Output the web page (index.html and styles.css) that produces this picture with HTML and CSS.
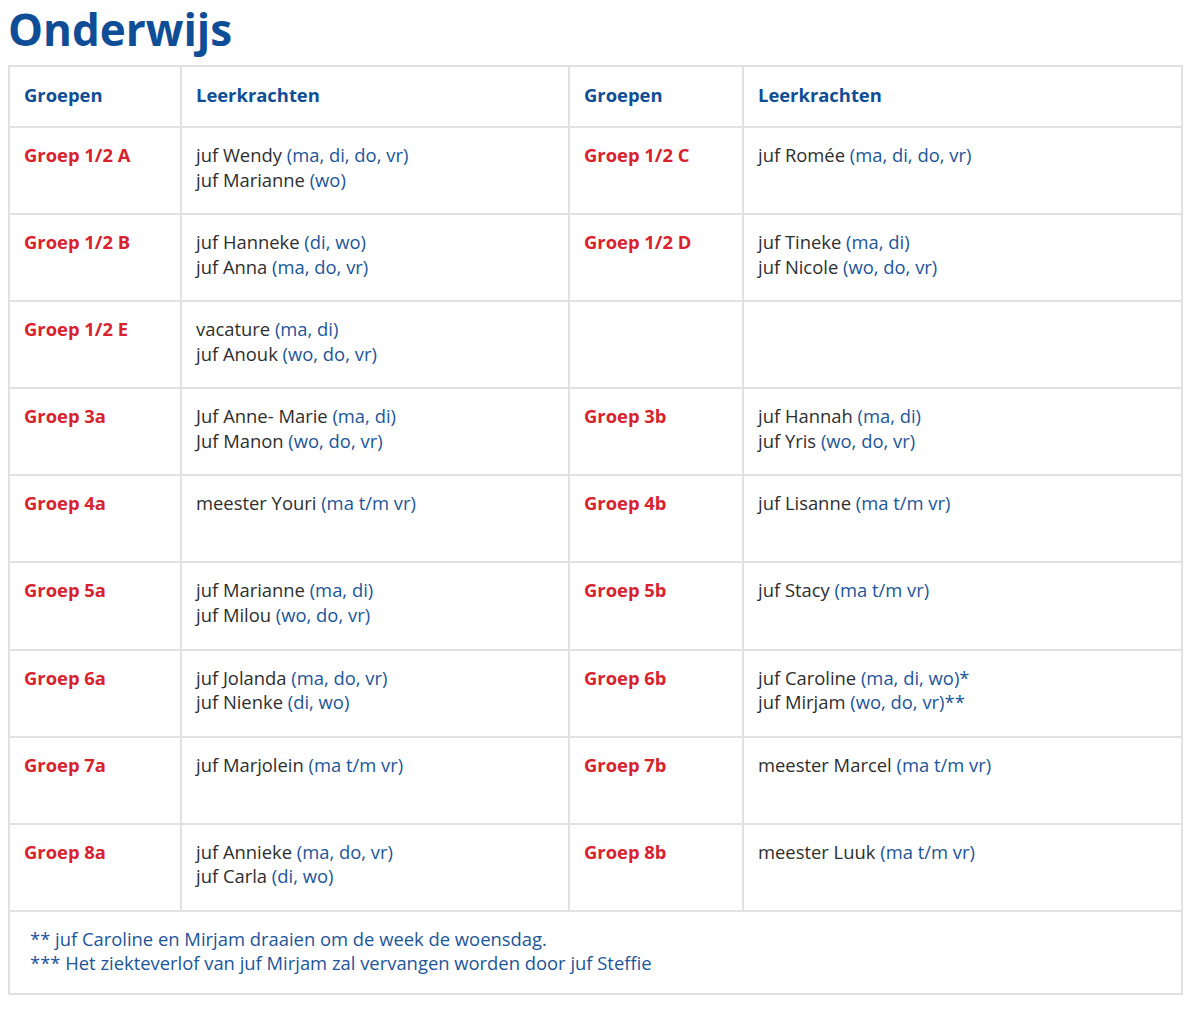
FILE: index.html
```html
<!DOCTYPE html>
<html lang="nl">
<head>
<meta charset="utf-8">
<title>Onderwijs</title>
<link rel="stylesheet" href="styles.css">
</head>
<body>
<h1 class="title">Onderwijs</h1>
<table class="grid">
  <colgroup>
    <col class="c1"><col class="c2"><col class="c3"><col class="c4">
  </colgroup>
  <thead>
    <tr class="head">
      <th>Groepen</th><th>Leerkrachten</th><th>Groepen</th><th>Leerkrachten</th>
    </tr>
  </thead>
  <tbody>
    <tr>
      <td class="grp">Groep 1/2 A</td>
      <td>juf Wendy <span class="d">(ma, di, do, vr)</span><br>juf Marianne <span class="d">(wo)</span></td>
      <td class="grp">Groep 1/2 C</td>
      <td>juf Romée <span class="d">(ma, di, do, vr)</span></td>
    </tr>
    <tr>
      <td class="grp">Groep 1/2 B</td>
      <td>juf Hanneke <span class="d">(di, wo)</span><br>juf Anna <span class="d">(ma, do, vr)</span></td>
      <td class="grp">Groep 1/2 D</td>
      <td>juf Tineke <span class="d">(ma, di)</span><br>juf Nicole <span class="d">(wo, do, vr)</span></td>
    </tr>
    <tr>
      <td class="grp">Groep 1/2 E</td>
      <td>vacature <span class="d">(ma, di)</span><br>juf Anouk <span class="d">(wo, do, vr)</span></td>
      <td></td>
      <td></td>
    </tr>
    <tr>
      <td class="grp">Groep 3a</td>
      <td>Juf Anne- Marie <span class="d">(ma, di)</span><br>Juf Manon <span class="d">(wo, do, vr)</span></td>
      <td class="grp">Groep 3b</td>
      <td>juf Hannah <span class="d">(ma, di)</span><br>juf Yris <span class="d">(wo, do, vr)</span></td>
    </tr>
    <tr>
      <td class="grp">Groep 4a</td>
      <td>meester Youri <span class="d">(ma t/m vr)</span></td>
      <td class="grp">Groep 4b</td>
      <td>juf Lisanne <span class="d">(ma t/m vr)</span></td>
    </tr>
    <tr>
      <td class="grp">Groep 5a</td>
      <td>juf Marianne <span class="d">(ma, di)</span><br>juf Milou <span class="d">(wo, do, vr)</span></td>
      <td class="grp">Groep 5b</td>
      <td>juf Stacy <span class="d">(ma t/m vr)</span></td>
    </tr>
    <tr>
      <td class="grp">Groep 6a</td>
      <td>juf Jolanda <span class="d">(ma, do, vr)</span><br>juf Nienke <span class="d">(di, wo)</span></td>
      <td class="grp">Groep 6b</td>
      <td>juf Caroline <span class="d">(ma, di, wo)*</span><br>juf Mirjam <span class="d">(wo, do, vr)**</span></td>
    </tr>
    <tr>
      <td class="grp">Groep 7a</td>
      <td>juf Marjolein <span class="d">(ma t/m vr)</span></td>
      <td class="grp">Groep 7b</td>
      <td>meester Marcel <span class="d">(ma t/m vr)</span></td>
    </tr>
    <tr>
      <td class="grp">Groep 8a</td>
      <td>juf Annieke <span class="d">(ma, do, vr)</span><br>juf Carla <span class="d">(di, wo)</span></td>
      <td class="grp">Groep 8b</td>
      <td>meester Luuk <span class="d">(ma t/m vr)</span></td>
    </tr>
    <tr class="foot">
      <td colspan="4">** juf Caroline en Mirjam draaien om de week de woensdag.<br>*** Het ziekteverlof van juf Mirjam zal vervangen worden door juf Steffie</td>
    </tr>
  </tbody>
</table>
</body>
</html>
```
FILE: styles.css
```css
body {
  margin: 0 8px;
  background: #ffffff;
  font-family: "Open Sans", "Liberation Sans", sans-serif;
  color: #333333;
}
.title {
  margin: 0 0 8px 0;
  padding-top: 2px;
  font-size: 44px;
  line-height: 55px;
  font-weight: 700;
  color: #0f4d96;
  letter-spacing: 0;
}
.grid {
  width: 1175px;
  border-collapse: collapse;
  table-layout: fixed;
  font-size: 18.4px;
  line-height: 24.5px;
}
.c1 { width: 172px; }
.c2 { width: 388px; }
.c3 { width: 174px; }
.c4 { width: auto; }
.grid th,
.grid td {
  border: 2px solid #e1e1e1;
  text-align: left;
  vertical-align: top;
  padding: 15px 14px 0 14px;
}
.grid th {
  height: 57px;
  vertical-align: middle;
  padding-top: 0;
  padding-bottom: 2px;
  color: #0f4d96;
  font-weight: 700;
}
.grid td {
  height: 70.1px;
  color: #2e2e2e;
}
.grid td.grp {
  color: #d8232f;
  font-weight: 700;
}
.d {
  color: #1c5599;
}
.grid .foot td {
  height: 66px;
  padding: 15px 20px 0 20px;
  color: #1c5599;
}
```
